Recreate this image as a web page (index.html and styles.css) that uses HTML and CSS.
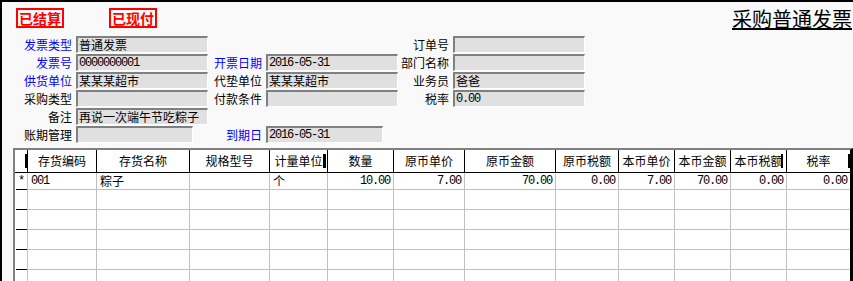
FILE: index.html
```html
<!DOCTYPE html>
<html lang="zh-CN">
<head>
  <meta charset="UTF-8">
  <title>采购普通发票</title>
  <link rel="stylesheet" href="styles.css">
</head>
<body>
  <div class="window">
    <!-- 状态与标题 -->
    <div class="top">
      <span class="stamp">已结算</span>
      <span class="stamp">已现付</span>
      <h1 class="title">采购普通发票</h1>
    </div>

    <!-- 表头信息 -->
    <div class="form">
      <span class="lbl blue">发票类型</span><div class="field">普通发票</div>
      <span></span><span></span>
      <span class="lbl">订单号</span><div class="field"></div>

      <span class="lbl blue">发票号</span><div class="field num">0000000001</div>
      <span class="lbl blue">开票日期</span><div class="field num">2016-05-31</div>
      <span class="lbl">部门名称</span><div class="field"></div>

      <span class="lbl blue">供货单位</span><div class="field">某某某超市</div>
      <span class="lbl">代垫单位</span><div class="field">某某某超市</div>
      <span class="lbl">业务员</span><div class="field">爸爸</div>

      <span class="lbl">采购类型</span><div class="field"></div>
      <span class="lbl">付款条件</span><div class="field"></div>
      <span class="lbl">税率</span><div class="field num">0.00</div>

      <span class="lbl">备注</span><div class="field">再说一次端午节吃粽子</div>
      <span></span><span></span><span></span><span></span>

      <span class="lbl">账期管理</span><div class="field short"></div>
      <span class="lbl blue">到期日</span><div class="field short num">2016-05-31</div>
      <span></span><span></span>
    </div>

    <!-- 存货明细 -->
    <div class="grid">
      <div class="hd rh cut"></div>
      <div class="hd">存货编码</div>
      <div class="hd">存货名称</div>
      <div class="hd">规格型号</div>
      <div class="hd cut cut-1">计量单位</div>
      <div class="hd">数量</div>
      <div class="hd">原币单价</div>
      <div class="hd">原币金额</div>
      <div class="hd">原币税额</div>
      <div class="hd">本币单价</div>
      <div class="hd">本币金额</div>
      <div class="hd cut cut-3">本币税额</div>
      <div class="hd cut">税率</div>

      <div class="rhc first num">*</div>
      <div class="cell first num">001</div>
      <div class="cell first">粽子</div>
      <div class="cell first"></div>
      <div class="cell first">个</div>
      <div class="cell first num right">10.00</div>
      <div class="cell first num right">7.00</div>
      <div class="cell first num right">70.00</div>
      <div class="cell first num right">0.00</div>
      <div class="cell first num right">7.00</div>
      <div class="cell first num right">70.00</div>
      <div class="cell first num right">0.00</div>
      <div class="cell first num right">0.00</div>

      <div class="rhc"></div><div class="cell"></div><div class="cell"></div><div class="cell"></div><div class="cell"></div><div class="cell"></div><div class="cell"></div><div class="cell"></div><div class="cell"></div><div class="cell"></div><div class="cell"></div><div class="cell"></div><div class="cell"></div>
      <div class="rhc"></div><div class="cell"></div><div class="cell"></div><div class="cell"></div><div class="cell"></div><div class="cell"></div><div class="cell"></div><div class="cell"></div><div class="cell"></div><div class="cell"></div><div class="cell"></div><div class="cell"></div><div class="cell"></div>
      <div class="rhc"></div><div class="cell"></div><div class="cell"></div><div class="cell"></div><div class="cell"></div><div class="cell"></div><div class="cell"></div><div class="cell"></div><div class="cell"></div><div class="cell"></div><div class="cell"></div><div class="cell"></div><div class="cell"></div>
      <div class="rhc"></div><div class="cell"></div><div class="cell"></div><div class="cell"></div><div class="cell"></div><div class="cell"></div><div class="cell"></div><div class="cell"></div><div class="cell"></div><div class="cell"></div><div class="cell"></div><div class="cell"></div><div class="cell"></div>
      <div class="rhc"></div><div class="cell"></div><div class="cell"></div><div class="cell"></div><div class="cell"></div><div class="cell"></div><div class="cell"></div><div class="cell"></div><div class="cell"></div><div class="cell"></div><div class="cell"></div><div class="cell"></div><div class="cell"></div>
    </div>
  </div>
</body>
</html>
```

FILE: styles.css
```css
/* 基本样式 */
body {
  margin: 0;
  height: 281px;
  overflow: hidden;
  background: #f9f9f9;
  font-family: "Noto Sans CJK SC", sans-serif;
  font-size: 12px;
  color: #000;
}
.window {
  border-top: 2px solid #000;
  border-left: 2px solid #000;
  height: 279px;
}
.num {
  font-family: "Liberation Mono", "Noto Sans CJK SC", monospace;
  font-size: 12px;
  letter-spacing: -1.2px;
}

/* 顶部 */
.top {
  display: flex;
  align-items: flex-start;
  height: 34px;
  box-sizing: border-box;
  padding: 6px 1px 0 14px;
}
.stamp {
  border: 2px solid #f00;
  color: #f00;
  font-size: 14px;
  font-weight: bold;
  line-height: 16px;
  padding: 0 1px;
}
.stamp + .stamp {
  margin-left: 45px;
}
.title {
  margin: 0 0 0 auto;
  font-size: 20px;
  font-weight: normal;
  line-height: 22px;
  text-decoration: underline;
}

/* 表头字段 */
.form {
  display: grid;
  grid-template-columns: 74px 132px 58px 132px 55px 132px;
  grid-auto-rows: 17px;
  row-gap: 1px;
}
.lbl {
  text-align: right;
  padding-right: 4px;
  line-height: 17px;
  white-space: nowrap;
}
.blue {
  color: #00f;
}
.field {
  box-sizing: border-box;
  border-top: 2px solid #808080;
  border-left: 2px solid #808080;
  border-right: 1px solid #fff;
  border-bottom: 1px solid #fff;
  background: #e0e0e0;
  padding-left: 1px;
  line-height: 14px;
  white-space: nowrap;
  overflow: hidden;
}
.short {
  width: 117px;
}

/* 明细表格 */
.grid {
  margin: 5px 0 0 11px;
  border-top: 2px solid #808080;
  border-left: 2px solid #808080;
  border-right: 3px solid #000;
  background: #fff;
  display: grid;
  grid-template-columns: 12px 69px 93px 80px 58px 66px 71px 91px 63px 56px 56px 56px 64px;
  grid-template-rows: 23px 17px;
  grid-auto-rows: 20px;
}
.hd {
  box-sizing: border-box;
  border-left: 1px solid #000;
  border-bottom: 1px solid #000;
  text-align: center;
  line-height: 22px;
  white-space: nowrap;
  overflow: hidden;
}
.hd.rh {
  border-left: none;
}
/* 被截断的表头字 */
.cut {
  background: linear-gradient(#000, #000) right 0 center / 2px 14px no-repeat;
}
.cut-1 {
  background-position: right 1px center;
  background-size: 3px 14px;
}
.cut-3 {
  background-position: right 3px center;
}
.cell {
  box-sizing: border-box;
  border-left: 1px solid #c0c0c0;
  border-bottom: 1px solid #c0c0c0;
  padding: 0 3px;
  line-height: 19px;
  white-space: nowrap;
  overflow: hidden;
}
.rhc {
  margin-left: 1px;
  border-bottom: 1px solid #000;
  padding-left: 2px;
  line-height: 19px;
}
.first {
  line-height: 16px;
}
.right {
  text-align: right;
}
```
